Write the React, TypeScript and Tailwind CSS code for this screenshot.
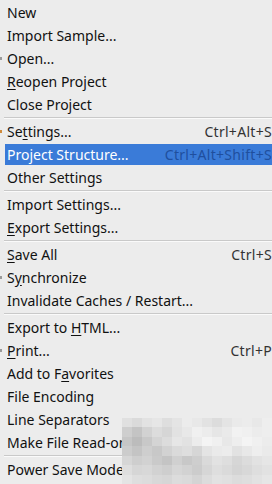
import React from "react";

type Item =
  | { sep: true }
  | { sep?: false; label: React.ReactNode; shortcut?: string; active?: boolean; dot?: string };

const U = ({ c }: { c: string }) => <span className="underline underline-offset-2">{c}</span>;

const items: Item[] = [
  { label: "New" },
  { label: "Import Sample..." },
  { label: "Open...", dot: "#9a9a9a" },
  { label: <><U c="R" />eopen Project</> },
  { label: "Close Project" },
  { sep: true },
  { label: <>Se<U c="t" />tings...</>, shortcut: "Ctrl+Alt+S", dot: "#d08a3a" },
  { label: "Project Structure...", shortcut: "Ctrl+Alt+Shift+S", active: true },
  { label: "Other Settings" },
  { sep: true },
  { label: "Import Settings..." },
  { label: <><U c="E" />xport Settings...</> },
  { sep: true },
  { label: <><U c="S" />ave All</>, shortcut: "Ctrl+S" },
  { label: <>S<U c="y" />nchronize</>, dot: "#9a9a9a" },
  { label: "Invalidate Caches / Restart..." },
  { sep: true },
  { label: <>Export to <U c="H" />TML...</> },
  { label: <><U c="P" />rint...</>, shortcut: "Ctrl+P", dot: "#9a9a9a" },
  { label: <>Add to F<U c="a" />vorites</> },
  { label: "File Encoding" },
  { label: "Line Separators" },
  { label: "Make File Read-only" },
  { sep: true },
  { label: "Power Save Mode" },
];

const shades = [
  [224, 218, 226, 230, 222, 228, 236, 232, 226, 220, 228, 234, 236, 232, 238],
  [206, 196, 210, 220, 214, 226, 232, 240, 236, 230, 234, 242, 240, 236, 238],
  [198, 188, 200, 212, 220, 230, 226, 236, 244, 240, 232, 238, 244, 240, 236],
  [204, 196, 206, 200, 210, 218, 222, 214, 228, 234, 236, 226, 232, 238, 234],
  [214, 206, 210, 202, 196, 208, 200, 206, 218, 226, 222, 214, 220, 226, 230],
  [222, 214, 216, 210, 206, 214, 210, 204, 214, 222, 218, 212, 216, 222, 226],
  [228, 222, 220, 216, 214, 220, 218, 212, 220, 226, 224, 220, 222, 226, 230],
];

export default function App() {
  return (
    <div
      className="relative w-[272px] h-[484px] overflow-hidden bg-[#ececec] text-[14px] text-[#111]"
      style={{ fontFamily: '"Noto Sans", "Open Sans", sans-serif' }}
    >
      <div className="w-[290px] pt-px flex flex-col">
        {items.map((it, i) =>
          it.sep ? (
            <div key={i} className="h-[4px] flex flex-col justify-center pl-[4px]">
              <div className="h-px bg-[#c9c9c9]" />
              <div className="h-px bg-[#fafafa]" />
            </div>
          ) : (
            <div key={i} className="relative h-[23px] flex items-center">
              {it.dot && (
                <div className="absolute left-0 top-[10px] w-[2px] h-[3px]" style={{ backgroundColor: it.dot }} />
              )}
              <div
                className={
                  "ml-[5px] flex-1 h-[21px] flex items-center pl-[2px] pr-[18px] " +
                  (it.active ? "bg-[#3a7bd8] text-white" : "")
                }
              >
                <span className="flex-1 whitespace-nowrap leading-none">{it.label}</span>
                {it.shortcut && (
                  <span
                    className={
                      "whitespace-nowrap leading-none tracking-[0.3px] " +
                      (it.active ? "text-[#1f4f9e]" : "text-[#333]")
                    }
                  >
                    {it.shortcut}
                  </span>
                )}
              </div>
            </div>
          )
        )}
      </div>
      <div className="absolute left-[122px] top-[418px] w-[150px] h-[66px] flex flex-col">
        {shades.map((row, r) => (
          <div key={r} className="flex flex-1">
            {row.map((s, c) => (
              <div key={c} className="flex-1" style={{ backgroundColor: `rgb(${s},${s},${s})` }} />
            ))}
          </div>
        ))}
      </div>
    </div>
  );
}
